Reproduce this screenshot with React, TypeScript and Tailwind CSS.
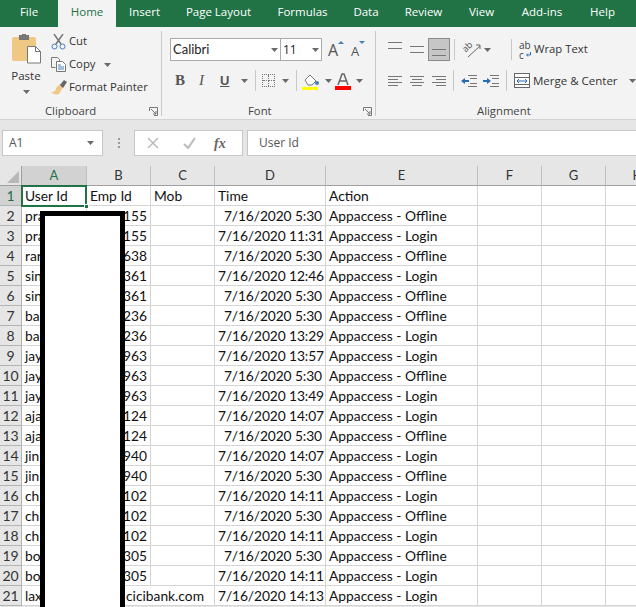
const tabs = [
  { name: "File", width: "w-[58px]" },
  { name: "Home", width: "w-[58px]" },
  { name: "Insert", width: "w-[57px]" },
  { name: "Page Layout", width: "w-[91px]" },
  { name: "Formulas", width: "w-[77px]" },
  { name: "Data", width: "w-[50px]" },
  { name: "Review", width: "w-[65px]" },
  { name: "View", width: "w-[51px]" },
  { name: "Add-ins", width: "w-[70px]" },
  { name: "Help", width: "w-[51px]" },
];
const cols = ["A", "B", "C", "D", "E", "F", "G", "H"];

const rows = [
  ["pra", "0155", "7/16/2020 5:30", "Appaccess - Offline"],
  ["pra", "0155", "7/16/2020 11:31", "Appaccess - Login"],
  ["rar", "3638", "7/16/2020 5:30", "Appaccess - Offline"],
  ["sin", "9361", "7/16/2020 12:46", "Appaccess - Login"],
  ["sin", "9361", "7/16/2020 5:30", "Appaccess - Offline"],
  ["ba", "3236", "7/16/2020 5:30", "Appaccess - Offline"],
  ["ba", "3236", "7/16/2020 13:29", "Appaccess - Login"],
  ["jay", "9963", "7/16/2020 13:57", "Appaccess - Login"],
  ["jay", "9963", "7/16/2020 5:30", "Appaccess - Offline"],
  ["jay", "9963", "7/16/2020 13:49", "Appaccess - Login"],
  ["aja", "1124", "7/16/2020 14:07", "Appaccess - Login"],
  ["aja", "1124", "7/16/2020 5:30", "Appaccess - Offline"],
  ["jin", "9940", "7/16/2020 14:07", "Appaccess - Login"],
  ["jin", "9940", "7/16/2020 5:30", "Appaccess - Offline"],
  ["ch", "1102", "7/16/2020 14:11", "Appaccess - Login"],
  ["ch", "1102", "7/16/2020 5:30", "Appaccess - Offline"],
  ["ch", "1102", "7/16/2020 14:11", "Appaccess - Login"],
  ["bo", "8305", "7/16/2020 5:30", "Appaccess - Offline"],
  ["bo", "8305", "7/16/2020 14:11", "Appaccess - Login"],
];

const cell = "h-5 border-r border-b border-[#d4d4d4] px-[3px] leading-[20px] whitespace-nowrap overflow-hidden";
const rowHead = "h-5 border-r border-b border-[#b4b4b4] text-center leading-[20px] text-[14px]";

const Caret = ({ className = "" }: { className?: string }) => (
  <svg width="7" height="4" viewBox="0 0 7 4" className={className}>
    <path d="M0 0h7L3.500 4z" fill="#6a6a6a" />
  </svg>
);

const Sep = ({ className = "" }: { className?: string }) => <div className={`w-px shrink-0 bg-[#c8c8c8] ${className}`} />;

const Launcher = () => (
  <svg width="9" height="9" viewBox="0 0 9 9" fill="none" stroke="#777">
    <path d="M.5 4V.5h8v8H5M2 2l5 5M7 4v3H4" />
  </svg>
);

const Lines = ({ widths, aligned = "left", gap = 5 }: { widths: number[]; aligned?: string; gap?: number }) => (
  <div
    className={`flex flex-col ${aligned === "left" ? "items-start" : aligned === "center" ? "items-center" : "items-end"} w-[14px]`}
    style={{ gap }}
  >
    {widths.map((w, i) => (
      <div key={i} className="h-px bg-[#777]" style={{ width: w }} />
    ))}
  </div>
);

const Clipboard = () => (
  <div className="w-[161px] shrink-0 flex flex-col">
    <div className="h-[73px] shrink-0 flex">
      <div className="w-[50px] ml-[1px] flex flex-col items-center">
        <svg width="30" height="30" viewBox="0 0 30 30" className="mt-[4px] ml-[2px]">
          <rect x="0" y="3" width="24" height="24" rx="2" fill="#efc884" />
          <rect x="7" y="1" width="10" height="5" fill="#777" />
          <rect x="10" y="0" width="4" height="2" fill="#777" />
          <path d="M15.500 12.500h8l5 5v11.500h-13z" fill="#fff" stroke="#777" />
          <path d="M23.500 12.500v5h5" fill="none" stroke="#777" />
        </svg>
        <span className="mt-[4px] text-[11.500px] leading-[16px] text-[#333]">Paste</span>
        <Caret className="mt-[6px]" />
      </div>
      <div className="flex flex-col">
        {[
          { label: "Cut" },
          { label: "Copy", caret: true },
          { label: "Format Painter" },
        ].map((item, i) => (
          <div key={item.label} className="h-[23px] flex items-center">
            <div className="w-[18px] flex justify-start">
              {i === 0 && (
                <svg width="15" height="16" viewBox="0 0 15 16" fill="none">
                  <path d="M3 0l7 10M12 0L5 10" stroke="#777" strokeWidth="1.500" />
                  <circle cx="3.500" cy="12.500" r="2.500" stroke="#4a7fb5" />
                  <circle cx="11.500" cy="12.500" r="2.500" stroke="#4a7fb5" />
                </svg>
              )}
              {i === 1 && (
                <svg width="15" height="15" viewBox="0 0 15 15" fill="none" stroke="#777">
                  <path d="M.5.500h6l2 2v2M.5.500v10h4" />
                  <path d="M5.500 4.500h6l3 3v7h-9z" fill="#fff" />
                  <path d="M7 8h3M7 10h6M7 12h6" stroke="#4a7fb5" />
                </svg>
              )}
              {i === 2 && (
                <svg width="16" height="15" viewBox="0 0 16 15">
                  <path d="M9 4l3 3-4 7c-3 1-6 0-8-2 3 0 5-1 5-4z" fill="#efc884" />
                  <path d="M9 5l4-5 3 2-4 6z" fill="#666" />
                </svg>
              )}
            </div>
            <span className="text-[11.300px] text-[#333] whitespace-nowrap">{item.label}</span>
            {item.caret && <Caret className="ml-[9px]" />}
          </div>
        ))}
      </div>
    </div>
    <div className="h-4 shrink-0 flex items-center">
      <span className="ml-[45px] text-[11.300px] text-[#444]">Clipboard</span>
      <div className="ml-auto mr-[3px] flex"><Launcher /></div>
    </div>
  </div>
);

const FontGroup = () => (
  <div className="w-[213px] shrink-0 flex flex-col pl-[8px]">
    <div className="h-[73px] shrink-0 flex flex-col">
      <div className="mt-[8px] h-[23px] flex items-center">
        <div className="w-[111px] h-[23px] bg-white border border-[#ababab] flex items-center justify-between pl-[2px] pr-[2px] font-['Lato'] text-[13px] text-[#222]">
          Calibri
          <Caret />
        </div>
        <div className="w-[41px] h-[23px] bg-white border border-l-0 border-[#ababab] flex items-center justify-between pl-[2px] pr-[2px] text-[12px] text-[#222]">
          11
          <Caret />
        </div>
        <div className="ml-[6px] w-[17px] h-[20px] flex items-start">
          <span className="text-[16px] leading-[20px] text-[#555]">A</span>
          <svg width="6" height="3" viewBox="0 0 6 3" className="mt-[1px]"><path d="M0 3l3-3 3 3z" fill="#4a7fb5" /></svg>
        </div>
        <div className="ml-[6px] w-[15px] h-[20px] flex items-start">
          <span className="mt-[2px] text-[13px] leading-[18px] text-[#555]">A</span>
          <svg width="6" height="3" viewBox="0 0 6 3" className="mt-[1px]"><path d="M0 0h6L3 3z" fill="#4a7fb5" /></svg>
        </div>
      </div>
      <div className="mt-[8px] h-[23px] flex items-center text-[14px] text-[#555]">
        <span className="w-[11px] ml-[5px] font-['Liberation_Serif'] font-bold text-[15px] leading-none">B</span>
        <span className="w-[10px] ml-[13px] font-['Liberation_Serif'] italic text-[15px] leading-none">I</span>
        <span className="w-[11px] ml-[11px] font-['Liberation_Sans'] font-bold underline text-[13px] leading-none">U</span>
        <Caret className="ml-[10px]" />
        <Sep className="h-[21px] ml-[7px]" />
        <div className="ml-[6px] w-[13px] h-[13px] border border-dotted border-[#777] grid grid-cols-2">
          <div className="border-r border-b border-dotted border-[#777]" />
          <div className="border-b border-dotted border-[#777]" />
          <div className="border-r border-dotted border-[#777]" />
        </div>
        <Caret className="ml-[7px]" />
        <Sep className="h-[21px] ml-[7px]" />
        <svg width="18" height="18" viewBox="0 0 18 18" className="ml-[5px]">
          <path d="M3 8l5-5 6 6-4 4H6z" fill="#fff" stroke="#777" />
          <circle cx="15" cy="11" r="2" fill="#4a7fb5" />
          <rect x="0" y="15" width="16" height="3" fill="#ffff00" />
        </svg>
        <Caret className="ml-[5px]" />
        <svg width="16" height="18" viewBox="0 0 16 18" className="ml-[3px]">
          <path d="M3 13L7 2h2l4 11M5 9h6" fill="none" stroke="#666" strokeWidth="1.500" />
          <rect x="0" y="14" width="16" height="4" fill="#ff0000" />
        </svg>
        <Caret className="ml-[5px]" />
      </div>
    </div>
    <div className="h-4 shrink-0 flex items-center">
      <span className="ml-[78px] text-[11.300px] text-[#444]">Font</span>
      <div className="ml-auto mr-[3px] flex"><Launcher /></div>
    </div>
  </div>
);

const Alignment = () => (
  <div className="flex-1 flex flex-col pl-[12px] overflow-hidden">
    <div className="h-[73px] shrink-0 flex flex-col">
      <div className="mt-[8px] h-[23px] flex items-center">
        <div className="w-[14px] mb-[8px]"><Lines widths={[14, 14]} /></div>
        <div className="w-[14px] ml-[8px] mb-[1px]"><Lines widths={[14, 14]} /></div>
        <div className="ml-[4px] w-[22px] h-[23px] bg-[#c6c6c6] border border-[#8a8a8a] flex items-end justify-center pb-[4px]">
          <Lines widths={[14, 14]} />
        </div>
        <Sep className="h-[21px] ml-[4px]" />
        <div className="relative ml-[7px] w-[19px] h-[18px]">
          <span className="absolute left-0 top-0 -rotate-45 text-[9px] leading-[12px] text-[#555]">ab</span>
          <svg width="19" height="18" viewBox="0 0 19 18" fill="none" stroke="#666" className="absolute inset-0">
            <path d="M6 16L18 5M14 4h4v4" />
          </svg>
        </div>
        <Caret className="ml-[3px]" />
        <Sep className="h-[21px] ml-[20px]" />
        <div className="ml-[7px] w-[14px] flex flex-col text-[10px] leading-[10px] text-[#444]">
          <span>ab</span>
          <span className="flex items-center gap-[2px]">
            c
            <svg width="5" height="5" viewBox="0 0 5 5" fill="none" stroke="#2b6cb0"><path d="M4.500 0v3H1M2 1.500L.5 3 2 4.500" /></svg>
          </span>
        </div>
        <span className="ml-[1px] text-[11.300px] text-[#333] whitespace-nowrap">Wrap Text</span>
      </div>
      <div className="mt-[8px] h-[23px] flex items-center">
        <Lines widths={[14, 10, 14, 10]} gap={2} />
        <div className="ml-[8px]"><Lines widths={[14, 10, 14, 10]} aligned="center" gap={2} /></div>
        <div className="ml-[8px]"><Lines widths={[14, 10, 14, 10]} aligned="right" gap={2} /></div>
        <Sep className="h-[21px] ml-[7px]" />
        <svg width="16" height="12" viewBox="0 0 16 12" className="ml-[7px]">
          <path d="M7 .5h9M9 3.500h7M9 8.500h7M7 11.500h9" stroke="#777" />
          <path d="M0 6l4-3v2h4v2H4v2z" fill="#2b6cb0" />
        </svg>
        <svg width="16" height="12" viewBox="0 0 16 12" className="ml-[6px]">
          <path d="M7 .5h9M9 3.500h7M9 8.500h7M7 11.500h9" stroke="#777" />
          <path d="M8 6L4 3v2H0v2h4v2z" fill="#2b6cb0" />
        </svg>
        <Sep className="h-[21px] ml-[7px]" />
        <svg width="16" height="15" viewBox="0 0 16 15" fill="none" className="ml-[7px]">
          <rect x=".5" y=".5" width="15" height="14" fill="#fff" stroke="#666" />
          <path d="M.5 4.500h15M.5 11.500h15" stroke="#666" />
          <path d="M3 8h10M3 8l2-2M3 8l2 2M13 8l-2-2M13 8l-2 2" stroke="#2b6cb0" />
        </svg>
        <span className="ml-[3px] text-[11.500px] text-[#333] whitespace-nowrap">Merge &amp; Center</span>
        <Caret className="ml-[11px]" />
      </div>
    </div>
    <div className="h-4 shrink-0 flex items-center">
      <span className="ml-[89px] text-[11.300px] text-[#444]">Alignment</span>
    </div>
  </div>
);

const App = () => {
  return (
    <div className="w-[636px] h-[607px] overflow-hidden bg-[#e6e6e6] font-['Open_Sans',sans-serif]">
      <div className="h-[27px] bg-[#217346] flex text-[11.500px] text-white">
        {tabs.map((t) => (
          <div
            key={t.name}
            className={`${t.width} h-[27px] leading-[24px] text-center whitespace-nowrap ${t.name === "Home" ? "bg-[#f3f3f3] text-[#217346]" : ""}`}
          >
            {t.name}
          </div>
        ))}
      </div>

      <div className="h-[93px] bg-[#f3f3f3] border-b border-[#d2d2d2] flex pt-[3px]">
        <Clipboard />
        <Sep className="h-[85px] mt-[1px]" />
        <FontGroup />
        <Sep className="h-[85px] mt-[1px]" />
        <Alignment />
      </div>

      <div className="h-[46px] flex pt-[10px] gap-[4px] text-[12px] text-[#555]">
        <div className="ml-[2px] w-[101px] h-[26px] bg-white border border-[#c6c6c6] flex items-center justify-between pl-[6px] pr-[8px]">
          A1
          <Caret />
        </div>
        <div className="w-[23px] flex flex-col items-center justify-center gap-[2px] pb-[10px]">
          <div className="w-[2px] h-[2px] bg-[#999]" />
          <div className="w-[2px] h-[2px] bg-[#999]" />
          <div className="w-[2px] h-[2px] bg-[#999]" />
        </div>
        <div className="w-[109px] h-[26px] bg-white border border-[#c6c6c6] flex items-center">
          <svg width="12" height="12" viewBox="0 0 12 12" className="ml-[12px]" fill="none" stroke="#bbb" strokeWidth="1.500">
            <path d="M1 1l10 10M11 1L1 11" />
          </svg>
          <svg width="13" height="12" viewBox="0 0 13 12" className="ml-[24px]" fill="none" stroke="#bbb" strokeWidth="2">
            <path d="M1 7l4 4 7-10" />
          </svg>
          <span className="ml-[18px] font-['Liberation_Serif'] italic font-bold text-[14px] text-[#666]">fx</span>
        </div>
        <div className="flex-1 h-[26px] bg-white border border-r-0 border-[#c6c6c6] flex items-center pl-[11px]">User Id</div>
      </div>

      <div className="relative grid grid-cols-[22px_65px_64px_64px_111px_152px_64px_64px_64px] font-['Lato',sans-serif] text-[13.800px] text-[#111] bg-white">
        <div className="h-5 bg-[#e6e6e6] border-r border-b border-[#9f9f9f] flex items-end justify-end p-[2px]">
          <svg width="12" height="12" viewBox="0 0 12 12"><path d="M12 0v12H0z" fill="#b8b8b8" /></svg>
        </div>
        {cols.map((c) => (
          <div
            key={c}
            className={`h-5 border-r border-b border-r-[#c0c0c0] text-center leading-[19px] text-[13px] ${c === "A" ? "bg-[#d2d2d2] text-[#217346] border-b-[#217346]" : "bg-[#e6e6e6] text-[#333] border-b-[#9f9f9f]"}`}
          >
            {c}
          </div>
        ))}

        <div className={`${rowHead} bg-[#d2d2d2] text-[#217346]`}>1</div>
        <div className={cell}>User Id</div>
        <div className={cell}>Emp Id</div>
        <div className={cell}>Mob</div>
        <div className={cell}>Time</div>
        <div className={cell}>Action</div>
        <div className={cell} />
        <div className={cell} />
        <div className={cell} />

        {rows.map((r, i) => (
          <div key={i} className="contents">
            <div className={`${rowHead} bg-[#e6e6e6] text-[#333]`}>{i + 2}</div>
            <div className={cell}>{r[0]}</div>
            <div className={`${cell} text-right`}>{r[1]}</div>
            <div className={cell} />
            <div className={`${cell} text-right tracking-[-0.1px]`}>{r[2]}</div>
            <div className={cell}>{r[3]}</div>
            <div className={cell} />
            <div className={cell} />
            <div className={cell} />
          </div>
        ))}

        <div className={`${rowHead} bg-[#e6e6e6] text-[#333]`}>21</div>
        <div className={`${cell} col-span-3 flex justify-between pr-[10px]`}>
          <span>lax</span>
          <span>cicibank.com</span>
        </div>
        <div className={`${cell} text-right tracking-[-0.1px]`}>7/16/2020 14:13</div>
        <div className={cell}>Appaccess - Login</div>
        <div className={cell} />
        <div className={cell} />
        <div className={cell} />

        {/* selection around A1 */}
        <div className="absolute left-[21px] top-[19px] w-[66px] h-[22px] border-2 border-[#217346]" />
        <div className="absolute left-[84px] top-[38px] w-[5px] h-[5px] bg-[#217346] border border-white" />
        {/* redaction box */}
        <div className="absolute left-[40px] top-[45px] w-[85px] h-[420px] bg-white border-[5px] border-b-0 border-black" />
      </div>
    </div>
  );
};

export default App;
